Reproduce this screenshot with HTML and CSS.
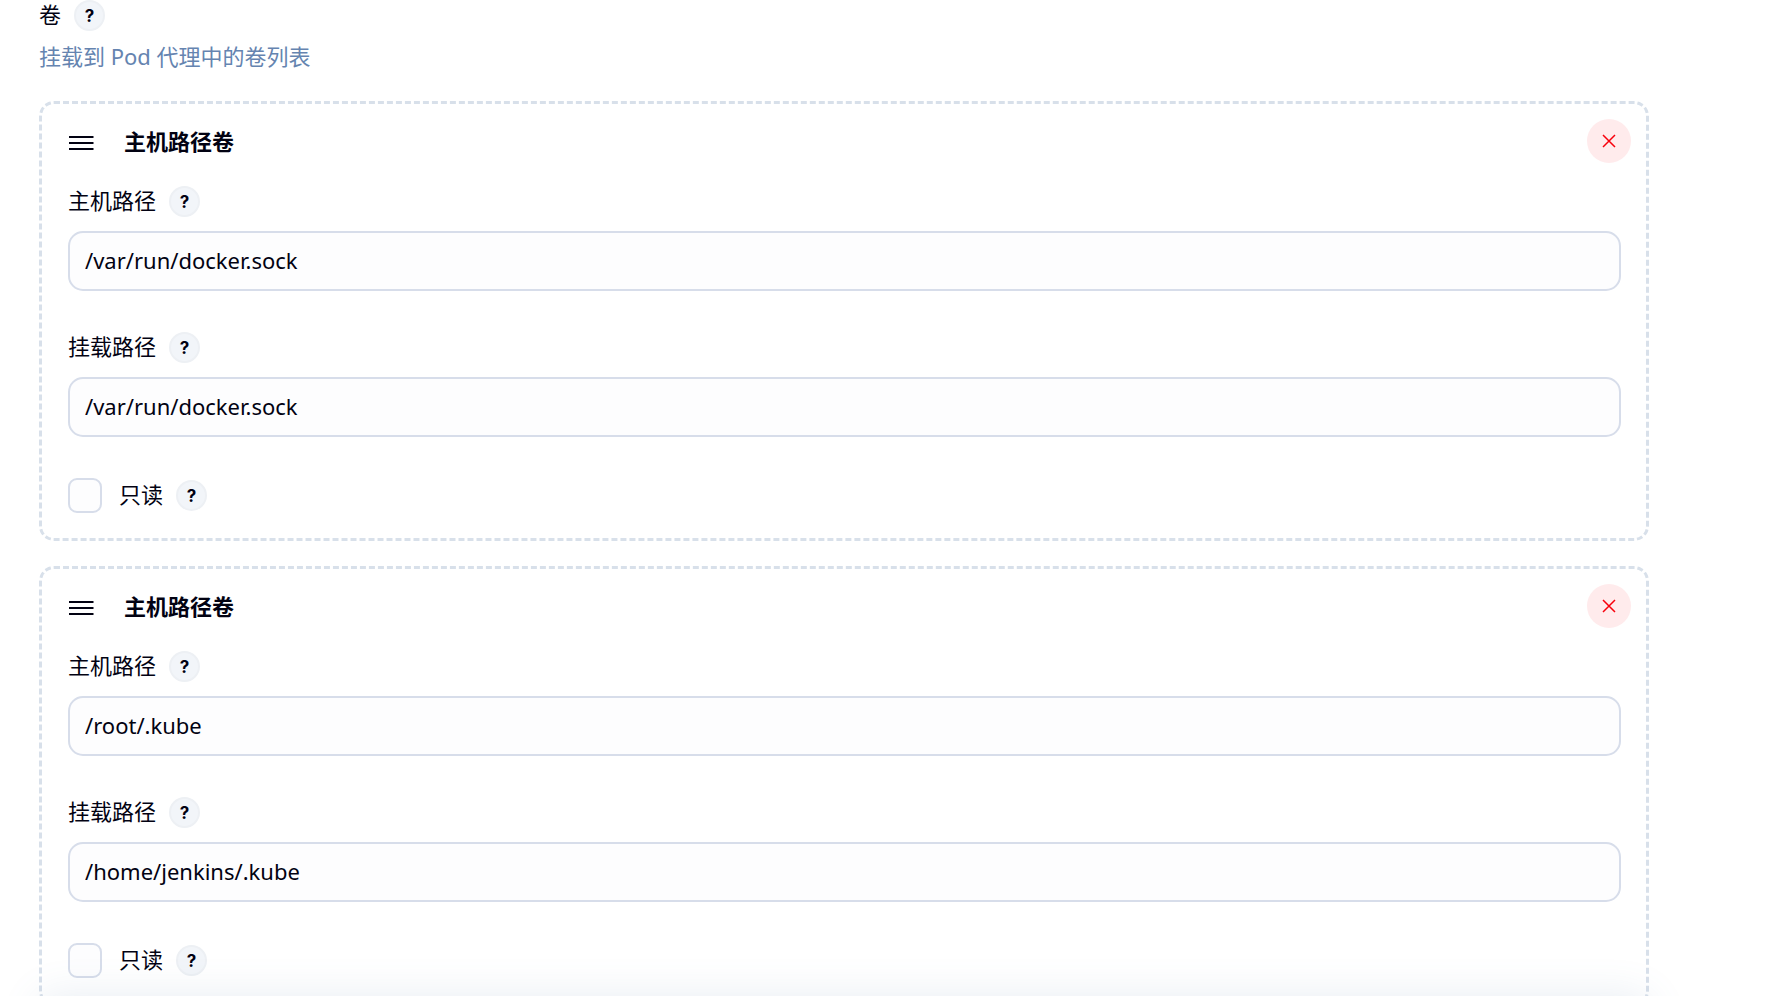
FILE: index.html
```html
<!DOCTYPE html>
<html lang="zh-CN">

<head>
    <meta charset="UTF-8">
    <title>卷</title>
    <link rel="stylesheet" href="styles.css">
</head>

<body>
    <form class="config" action="#" method="post">
        <div class="label-row">
            <span>卷</span>
            <button class="help" type="button" aria-label="帮助">?</button>
        </div>
        <p class="description">挂载到 Pod 代理中的卷列表</p>

        <section class="volume">
            <div class="volume-header">
                <svg class="handle" viewBox="0 0 26 16">
                    <path d="M1 2H25.500M1 8H25.500M1 14H25.500" />
                </svg>
                <h2>主机路径卷</h2>
                <button class="remove" type="button" aria-label="删除">
                    <svg viewBox="0 0 14 14">
                        <path d="M1 1L13 13M13 1L1 13" />
                    </svg>
                </button>
            </div>
            <div class="volume-body">
                <div class="field">
                    <div class="label-row">
                        <label for="host-path-1">主机路径</label>
                        <button class="help" type="button" aria-label="帮助">?</button>
                    </div>
                    <input class="text-input" type="text" id="host-path-1" value="/var/run/docker.sock">
                </div>
                <div class="field">
                    <div class="label-row">
                        <label for="mount-path-1">挂载路径</label>
                        <button class="help" type="button" aria-label="帮助">?</button>
                    </div>
                    <input class="text-input" type="text" id="mount-path-1" value="/var/run/docker.sock">
                </div>
                <div class="label-row">
                    <input class="checkbox" type="checkbox" id="read-only-1">
                    <label for="read-only-1">只读</label>
                    <button class="help" type="button" aria-label="帮助">?</button>
                </div>
            </div>
        </section>

        <section class="volume">
            <div class="volume-header">
                <svg class="handle" viewBox="0 0 26 16">
                    <path d="M1 2H25.500M1 8H25.500M1 14H25.500" />
                </svg>
                <h2>主机路径卷</h2>
                <button class="remove" type="button" aria-label="删除">
                    <svg viewBox="0 0 14 14">
                        <path d="M1 1L13 13M13 1L1 13" />
                    </svg>
                </button>
            </div>
            <div class="volume-body">
                <div class="field">
                    <div class="label-row">
                        <label for="host-path-2">主机路径</label>
                        <button class="help" type="button" aria-label="帮助">?</button>
                    </div>
                    <input class="text-input" type="text" id="host-path-2" value="/root/.kube">
                </div>
                <div class="field">
                    <div class="label-row">
                        <label for="mount-path-2">挂载路径</label>
                        <button class="help" type="button" aria-label="帮助">?</button>
                    </div>
                    <input class="text-input" type="text" id="mount-path-2" value="/home/jenkins/.kube">
                </div>
                <div class="label-row">
                    <input class="checkbox" type="checkbox" id="read-only-2">
                    <label for="read-only-2">只读</label>
                    <button class="help" type="button" aria-label="帮助">?</button>
                </div>
            </div>
        </section>
    </form>

    <div class="bottom-bar"></div>
</body>

</html>
```
FILE: styles.css
```css
* {
    box-sizing: border-box;
}

html {
    overflow: hidden;
}

body {
    margin: 0;
    background-color: #fff;
    color: #020212;
    font-family: "Noto Sans", "Noto Sans CJK SC", sans-serif;
    font-size: 22px;
    line-height: 30px;
}

.config {
    padding: 0 116px 0 39px;
}

.label-row {
    display: flex;
    align-items: center;
    gap: 13px;
}

.label-row span,
.label-row label {
    padding-bottom: 2px;
    line-height: 29px;
}

.help {
    width: 31px;
    height: 31px;
    padding: 0;
    border: 2px solid #edf0f4;
    border-radius: 50%;
    background-color: #f2f5f9;
    color: #020212;
    font-family: Inter, sans-serif;
    font-size: 17px;
    font-weight: 700;
    line-height: 26px;
    text-align: center;
}

.description {
    margin: 10px 0 30px;
    color: #6584b0;
}

.volume {
    margin-bottom: 25px;
    padding: 15px 15px 25px;
    border: 3px dashed #d8e0ea;
    border-radius: 15px;
}

.volume-header {
    display: flex;
    align-items: center;
    height: 44px;
    margin-bottom: 23px;
    padding-left: 11px;
}

.volume-header h2 {
    flex: 1;
    margin: 0 0 0 30px;
    font-size: 22px;
    font-weight: 700;
}

.handle {
    width: 26px;
    height: 16px;
    margin-top: 3px;
    fill: none;
    stroke: #020212;
    stroke-width: 2;
}

.remove {
    display: flex;
    align-items: center;
    justify-content: center;
    width: 44px;
    height: 44px;
    padding: 0;
    border: none;
    border-radius: 50%;
    background-color: #ffebec;
}

.remove svg {
    width: 14px;
    height: 14px;
    fill: none;
    stroke: #f8000c;
    stroke-width: 1.5;
}

.volume-body {
    padding: 0 10px 0 11px;
}

.field {
    margin-bottom: 41px;
}

.text-input {
    display: block;
    width: 100%;
    height: 60px;
    margin-top: 14px;
    padding: 0 15px 2px;
    border: 2px solid #d7ddea;
    border-radius: 15px;
    background-color: #fdfdfe;
    color: #020212;
    font: inherit;
}

.checkbox {
    appearance: none;
    width: 34px;
    height: 35px;
    margin: 0 4px 0 0;
    border: 2px solid #d7ddea;
    border-radius: 9px;
    background-color: #fdfdfe;
}

/* footer bar, only its shadow reaches into the window */
.bottom-bar {
    position: fixed;
    right: 116px;
    bottom: -80px;
    left: 39px;
    height: 80px;
    border-radius: 15px;
    box-shadow: 0 0 40px rgba(90, 125, 170, 0.14);
}
```
